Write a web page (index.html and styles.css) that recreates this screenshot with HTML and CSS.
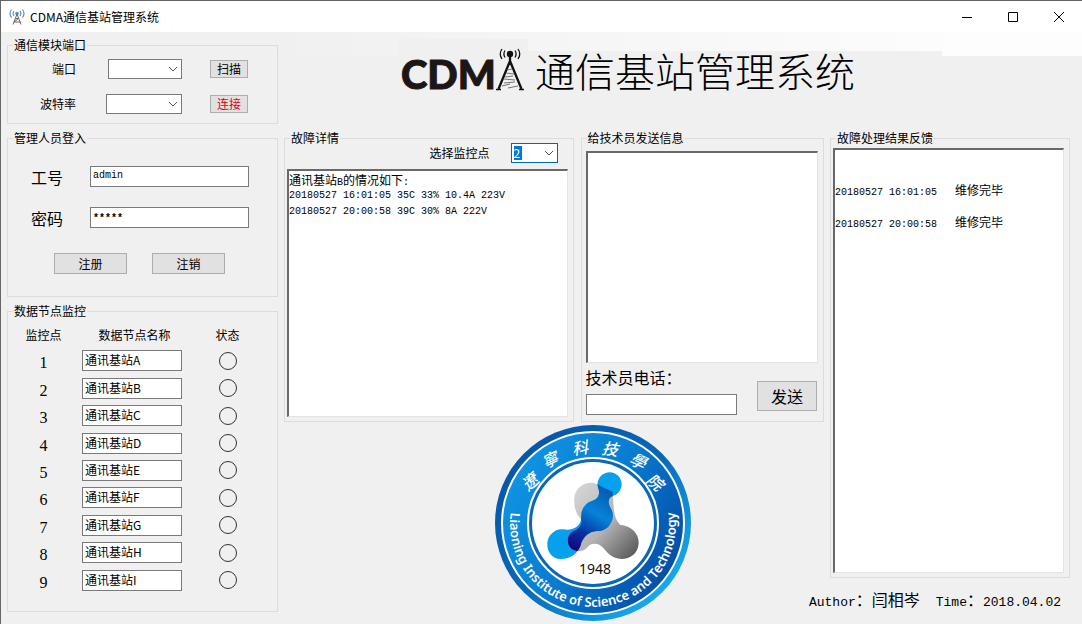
FILE: index.html
```html
<!DOCTYPE html>
<html lang="zh-CN">
<head>
<meta charset="utf-8">
<title>CDMA通信基站管理系统</title>
<link rel="stylesheet" href="styles.css">
</head>
<body>
<div class="window">
  <header class="titlebar">
    <svg class="app-icon" viewBox="0 0 16 16" aria-hidden="true">
      <g fill="none" stroke="#5b93c4" stroke-width="1.200"><path d="M2.500 0.500Q-0.500 4.500 2.500 8.500M5 2Q3.200 4.500 5 7M13.500 0.500q3 4 0 8M11 2q1.800 2.500 0 5"/></g>
      <circle cx="8" cy="4.500" r="1.800" fill="#5b93c4"/>
      <path d="M8 5L4 15.500M8 5l4 10.500M6.500 9.500h3L5 13h6.500" fill="none" stroke="#666" stroke-width="1"/>
    </svg>
    <h1 class="caption">CDMA通信基站管理系统</h1>
    <div class="window-buttons">
      <button type="button" aria-label="最小化"><svg viewBox="0 0 12 12"><path d="M1 6.500h10"/></svg></button>
      <button type="button" aria-label="最大化"><svg viewBox="0 0 12 12"><path d="M1.500 1.500h9v9h-9z"/></svg></button>
      <button type="button" aria-label="关闭"><svg viewBox="0 0 12 12"><path d="M1 1l10 10M11 1L1 11"/></svg></button>
    </div>
  </header>

  <main class="client">
    <div class="sidebar">
      <fieldset class="group">
        <legend>通信模块端口</legend>
        <div class="port-form">
          <label for="port">端口</label>
          <span class="combo combo-port"><select id="port"><option></option></select><svg viewBox="0 0 10 6"><path d="M1 1l4 4 4-4"/></svg></span>
          <button type="button" class="btn">扫描</button>
          <label for="baud">波特率</label>
          <span class="combo combo-baud"><select id="baud"><option></option></select><svg viewBox="0 0 10 6"><path d="M1 1l4 4 4-4"/></svg></span>
          <button type="button" class="btn btn-alert">连接</button>
        </div>
      </fieldset>

      <fieldset class="group group-login">
        <legend>管理人员登入</legend>
        <div class="login-form">
          <label for="staff">工号</label>
          <input id="staff" class="field mono" type="text" value="admin">
          <label for="pass">密码</label>
          <input id="pass" class="field mono stars" type="text" value="*****">
        </div>
        <div class="login-actions">
          <button type="button" class="btn">注册</button>
          <button type="button" class="btn">注销</button>
        </div>
      </fieldset>

      <fieldset class="group group-nodes">
        <legend>数据节点监控</legend>
        <table class="nodes">
          <thead><tr><th>监控点</th><th>数据节点名称</th><th>状态</th></tr></thead>
          <tbody>
            <tr><td>1</td><td><input class="field" type="text" aria-label="节点1" value="通讯基站A"></td><td><span class="lamp"></span></td></tr>
            <tr><td>2</td><td><input class="field" type="text" aria-label="节点2" value="通讯基站B"></td><td><span class="lamp"></span></td></tr>
            <tr><td>3</td><td><input class="field" type="text" aria-label="节点3" value="通讯基站C"></td><td><span class="lamp"></span></td></tr>
            <tr><td>4</td><td><input class="field" type="text" aria-label="节点4" value="通讯基站D"></td><td><span class="lamp"></span></td></tr>
            <tr><td>5</td><td><input class="field" type="text" aria-label="节点5" value="通讯基站E"></td><td><span class="lamp"></span></td></tr>
            <tr><td>6</td><td><input class="field" type="text" aria-label="节点6" value="通讯基站F"></td><td><span class="lamp"></span></td></tr>
            <tr><td>7</td><td><input class="field" type="text" aria-label="节点7" value="通讯基站G"></td><td><span class="lamp"></span></td></tr>
            <tr><td>8</td><td><input class="field" type="text" aria-label="节点8" value="通讯基站H"></td><td><span class="lamp"></span></td></tr>
            <tr><td>9</td><td><input class="field" type="text" aria-label="节点9" value="通讯基站I"></td><td><span class="lamp"></span></td></tr>
          </tbody>
        </table>
      </fieldset>
    </div>

    <div class="content">
      <div class="banner">
        <div class="brand">
          <span class="brand-text">CDM</span>
          <svg class="tower" viewBox="0 0 28 44" aria-hidden="true">
            <circle cx="14" cy="7" r="3.200" fill="#111"/>
            <g fill="none" stroke="#111" stroke-width="1.300"><path d="M9 3.500q-2.200 3.500 0 7M19 3.500q2.200 3.500 0 7M6 2q-3.500 5 0 10M22 2q3.500 5 0 10"/></g>
            <path d="M14 9v9M14 14L2.500 42M14 14l11.500 28" fill="none" stroke="#111" stroke-width="2.300"/>
            <path d="M0 42.500h5M23 42.500h5" stroke="#111" stroke-width="1.500"/>
            <path d="M11 23l5-1M10 26l8 1M9 30l8-1M8 32l11 1M8 36l11-1M6 39l8-2M12 41l10-2" fill="none" stroke="#555" stroke-width="0.800"/>
          </svg>
        </div>
        <h2 class="banner-title">通信基站管理系统</h2>
      </div>

      <div class="panels">
        <div class="work">
          <fieldset class="group group-detail">
            <legend>故障详情</legend>
            <div class="picker">
              <label for="point">选择监控点</label>
              <span class="combo combo-active"><select id="point"><option>2</option></select><svg viewBox="0 0 10 6"><path d="M1 1l4 4 4-4"/></svg></span>
            </div>
            <div class="sunken log" role="log" aria-label="故障详情"><p>通讯基站<span class="mono">B</span>的情况如下<span class="mono">:</span></p><p class="mono">20180527 16:01:05 35C 33% 10.4A 223V</p><p class="mono">20180527 20:00:58 39C 30% 8A 222V</p></div>
          </fieldset>

          <fieldset class="group group-send">
            <legend>给技术员发送信息</legend>
            <textarea class="sunken message" aria-label="信息内容"></textarea>
            <div class="send-row">
              <div class="phone">
                <label for="phone">技术员电话：</label>
                <input id="phone" class="field" type="text">
              </div>
              <button type="button" class="btn btn-send">发送</button>
            </div>
          </fieldset>

          <div class="emblem-row">
            <svg class="emblem" viewBox="4 4 198 198" role="img" aria-label="Liaoning Institute of Science and Technology">
              <defs>
                <linearGradient id="rim" x1="0" y1="0" x2="1" y2="1"><stop offset="0" stop-color="#0750a4"/><stop offset="0.500" stop-color="#0868b8"/><stop offset="0.850" stop-color="#16a9ea"/><stop offset="1" stop-color="#0868b8"/></linearGradient>
                <linearGradient id="band" x1="0" y1="0.200" x2="1" y2="0.800"><stop offset="0" stop-color="#1196e4"/><stop offset="0.500" stop-color="#087bd0"/><stop offset="1" stop-color="#0447a0"/></linearGradient>
                <linearGradient id="steel" x1="0" y1="0" x2="1" y2="1"><stop offset="0" stop-color="#dcdcdc"/><stop offset="0.550" stop-color="#b4b4b4"/><stop offset="1" stop-color="#4e4e4e"/></linearGradient>
                <linearGradient id="deep" gradientUnits="userSpaceOnUse" x1="240" y1="385" x2="350" y2="200"><stop offset="0" stop-color="#1a007c"/><stop offset="0.300" stop-color="#0637a4"/><stop offset="0.600" stop-color="#0783d6"/><stop offset="1" stop-color="#0558ae"/></linearGradient>
                <path id="grayShape" d="M253 245A50 50 0 0 1 335 200L368 215C372 262 368 290 390 314C425 318 447 340 446 370C444 402 420 417 395 417C365 416 352 398 338 382C322 366 300 370 290 384C276 398 252 396 240 382C225 358 236 338 258 330C270 322 277 312 274 300C262 285 253 270 253 245Z"/>
                <clipPath id="grayClip"><use href="#grayShape"/></clipPath>
                <path id="blueShape" d="M325 205A36 36 0 1 1 370 227C352 233 354 250 362 264A46 46 0 0 1 320 333C298 335 284 347 274 368C268 400 240 417 212 417C185 416 171 395 172 370C173 345 195 325 220 328C250 333 274 318 274 290A46 46 0 0 1 306 243C328 236 330 220 325 205Z"/>
                <path id="lowerArc" d="M21 91A83 83 0 1 0 185 91"/>
              </defs>
              <circle cx="103" cy="103" r="98" fill="url(#rim)"/>
              <circle cx="103" cy="103" r="91" fill="url(#band)" stroke="#fff" stroke-width="2"/>
              <circle cx="103" cy="103" r="65" fill="#0b68b8" stroke="#fff" stroke-width="2"/>
              <circle cx="103" cy="103" r="61" fill="#fff"/>
              <g class="emblem-cn">
                <text transform="translate(40 62) rotate(-42)" y="6">遼</text>
                <text transform="translate(60 40) rotate(-25)" y="6">寧</text>
                <text transform="translate(90 28) rotate(-8)" y="6">科</text>
                <text transform="translate(120 29) rotate(8)" y="6">技</text>
                <text transform="translate(148 41) rotate(25)" y="6">學</text>
                <text transform="translate(165 62) rotate(40)" y="6">院</text>
              </g>
              <text class="emblem-en"><textPath href="#lowerArc" startOffset="50%">Liaoning Institute of Science and Technology</textPath></text>
              <g transform="scale(.3333)">
                <use href="#grayShape" fill="url(#steel)"/>
                <use href="#blueShape" fill="#06a0ec"/>
                <use href="#blueShape" fill="url(#deep)" clip-path="url(#grayClip)"/>
              </g>
              <text class="emblem-year" x="105" y="154">1948</text>
            </svg>
          </div>
        </div>

        <div class="results">
          <fieldset class="group group-feedback">
            <legend>故障处理结果反馈</legend>
            <div class="sunken log feedback" role="log" aria-label="故障处理结果反馈"><p></p><p></p><p><span class="mono">20180527 16:01:05   </span>维修完毕</p><p></p><p><span class="mono">20180527 20:00:58   </span>维修完毕</p></div>
          </fieldset>
          <footer class="credits"><span>Author<span class="credits-cn">：闫相岑</span></span><span>Time<span class="credits-cn">：</span>2018.04.02</span></footer>
        </div>
      </div>
    </div>
  </main>
</div>
</body>
</html>
```
FILE: styles.css
```css
* { box-sizing: border-box; }

body {
  margin: 0;
  background: #f0f0f0;
  color: #000;
  font: 12px/16px "Noto Sans CJK SC", sans-serif;
}

h1, h2, p { margin: 0; font-weight: 400; }

input, select, button, textarea { font: inherit; color: inherit; margin: 0; }

.window {
  min-height: 100vh;
  display: flex;
  flex-direction: column;
  border-top: 1px solid #666;
  border-left: 1px solid #666;
}

.titlebar {
  display: flex;
  align-items: center;
  height: 31px;
  padding-left: 8px;
  background: #fff;
}
.app-icon { width: 16px; height: 16px; margin-right: 5px; }
.caption { font-size: 12px; }
.window-buttons { display: flex; margin-left: auto; }
.window-buttons button {
  width: 46px;
  height: 30px;
  padding: 0;
  border: 0;
  background: none;
}
.window-buttons svg {
  display: block;
  width: 12px;
  height: 12px;
  margin: auto;
  fill: none;
  stroke: #000;
}

.client {
  flex: 1;
  display: grid;
  grid-template-columns: 271fr 786fr;
  column-gap: 6px;
  padding: 0 12px 0 6px;
  background: linear-gradient(90deg, #f0f0f0 25%, #fdfdfd 90%) 0 0 / 100% 24px no-repeat #f0f0f0;
}

.sidebar {
  display: flex;
  flex-direction: column;
  gap: 6px;
  padding-top: 5px;
}

.group {
  min-width: 0;
  margin: 0;
  padding: 0;
  border: 1px solid #dcdcdc;
}
.group legend { margin-left: 5px; padding: 0 1px; line-height: 16px; }

.field {
  display: block;
  width: 100%;
  height: 21px;
  padding: 0 2px 2px;
  border: 1px solid #7a7a7a;
  border-radius: 0;
  background: #fff;
}

.mono { font-family: "Liberation Mono", "Noto Sans CJK SC", monospace; font-size: 10px; }
.stars { font-weight: 700; padding-top: 3px; }

.btn {
  padding: 0;
  border: 1px solid #adadad;
  border-radius: 0;
  background: #e1e1e1;
  line-height: 16px;
}
.btn-alert { color: #e00012; }

.combo { position: relative; display: block; height: 20px; }
.combo select {
  appearance: none;
  display: block;
  width: 100%;
  height: 100%;
  padding: 0 20px 0 2px;
  border: 1px solid #7a7a7a;
  border-radius: 0;
  background: #fff;
}
.combo svg {
  position: absolute;
  right: 4px;
  top: 7px;
  width: 10px;
  height: 6px;
  fill: none;
  stroke: #555;
  pointer-events: none;
}
.combo-port { width: 74px; }
.combo-baud { width: 76px; }
.combo-active { width: 47px; }
.combo-active select {
  border-color: #0067b8;
  color: #fff;
  line-height: 16px;
  background: linear-gradient(#0078d7, #0078d7) 2px 2px / 8px 14px no-repeat #fff;
}

.port-form {
  display: grid;
  grid-template-columns: 68px 106px 66px;
  grid-auto-rows: 35px;
  align-items: center;
  justify-items: end;
  margin-top: -2px;
  padding-bottom: 2px;
}
.port-form .btn { width: 38px; height: 18px; }

.login-form {
  display: grid;
  grid-template-columns: 59px 1fr;
  grid-auto-rows: 41px;
  align-items: center;
  padding: 10px 28px 0 23px;
}
.login-form label { font-size: 16px; }
.login-actions {
  display: flex;
  gap: 25px;
  padding: 15px 0 22px 46px;
}
.login-actions .btn { width: 73px; height: 21px; }

.nodes {
  width: 255px;
  height: 271px;
  margin: 4px 0 17px 5px;
  border-collapse: collapse;
  table-layout: fixed;
  text-align: center;
}
.nodes th { height: 24px; padding: 0; font-weight: 400; }
.nodes td { padding: 0; }
.nodes th:first-child { width: 69px; }
.nodes th:first-child, .nodes td:first-child { padding-right: 8px; }
.nodes th:last-child { width: 81px; }
.nodes td:first-child { font: 16px/20px "Liberation Serif", serif; padding-top: 5px; }
.nodes .field { width: 100px; }
.lamp {
  display: block;
  width: 18px;
  height: 18px;
  margin: 0 auto;
  border: 1px solid #333;
  border-radius: 50%;
}

.content { display: flex; flex-direction: column; min-width: 0; }

.banner {
  display: flex;
  align-items: flex-end;
  height: 98px;
  padding: 7px 0 31px 114px;
}
.brand {
  display: flex;
  align-items: flex-end;
  align-self: stretch;
  width: 130px;
  padding-left: 3px;
  background: #f0f0f0;
}
.brand-text {
  margin-bottom: 4px;
  font: 900 40px/42px Lato, sans-serif;
  -webkit-text-stroke: 1px #1c1617;
  color: #1c1617;
}
.tower { width: 28px; height: 44px; margin-bottom: 8px; }
.banner-title {
  width: 414px;
  padding: 0 0 10px 7px;
  background: #f0f0f0;
  font-size: 40px;
  font-weight: 300;
  line-height: 38px;
}

.panels {
  flex: 1;
  display: grid;
  grid-template-columns: 540fr 240fr;
  column-gap: 6px;
}

.work {
  display: grid;
  grid-template-columns: 289fr 243fr;
  grid-template-rows: 292px auto;
  column-gap: 7px;
}

.group-detail, .group-send { display: flex; flex-direction: column; }

.sunken {
  border: 1px solid #e3e3e3;
  border-top: 2px solid #696969;
  border-left: 2px solid #696969;
  background: #fff;
}

.picker {
  display: flex;
  align-items: center;
  justify-content: flex-end;
  gap: 21px;
  padding: 0 15px 0 0;
  margin-top: -3px;
}
.log { overflow: auto; }
.log p { height: 16px; white-space: pre; }
.group-detail .log { flex: 1; margin: 6px 5px 4px 2px; padding-top: 1px; }
.feedback { height: 425px; margin: 2px 5px 4px 2px; }

.message {
  flex: 1;
  width: auto;
  margin: 5px 5px 0 4px;
  padding: 0;
  resize: none;
  border-radius: 0;
}

.send-row {
  display: flex;
  justify-content: space-between;
  align-items: flex-end;
  gap: 20px;
  padding: 4px 6px 6px 4px;
}
.phone { flex: 1; }
.phone label { display: block; margin-bottom: 7px; font-size: 16px; line-height: 20px; }
.btn-send { width: 60px; height: 30px; margin-bottom: 4px; font-size: 16px; }

.emblem-row {
  grid-column: 1 / -1;
  display: flex;
  justify-content: center;
  padding: 2px 0 0 78px;
}
.emblem { display: block; width: 198px; height: 198px; }
.emblem text { text-anchor: middle; }
.emblem-cn { fill: #fff; font: italic 500 16px "Noto Sans CJK SC", sans-serif; }
.emblem-en { fill: #fff; font: 600 13px "Noto Sans", sans-serif; }
.emblem-year { fill: #111; font: 14px "Noto Sans", sans-serif; }

.results { display: flex; flex-direction: column; }

.credits {
  display: flex;
  justify-content: flex-end;
  gap: 16px;
  margin: 14px 9px 0 -40px;
  font: 13px/20px "Liberation Mono", "Noto Sans CJK SC", monospace;
  white-space: nowrap;
}
.credits-cn { font-size: 16px; }
```
